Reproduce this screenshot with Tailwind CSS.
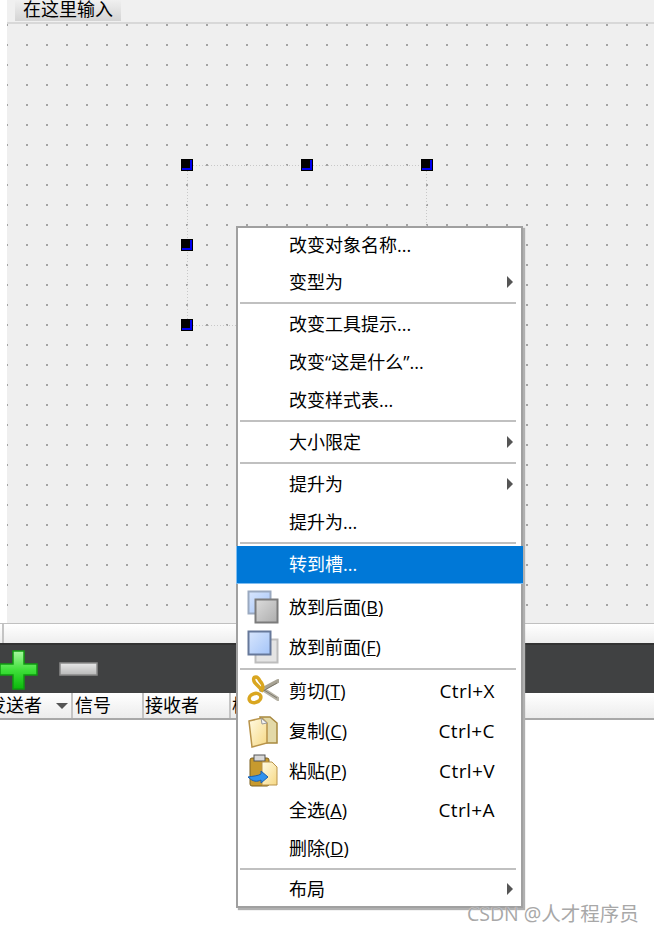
<!DOCTYPE html>
<html>
<head>
  <title>Qt Designer</title>
  <meta charset="utf-8">
  <script src="https://cdn.jsdelivr.net/npm/@tailwindcss/browser@4"></script>
</head>
<body class="relative w-[654px] h-[934px] overflow-hidden bg-white text-black text-[18px] font-['Open_Sans','Noto_Sans_CJK_SC',sans-serif]">

  <!-- designer form -->
  <div class="flex h-[643px]">
    <div class="w-[7px] bg-white"></div>
    <div class="flex-1 flex flex-col min-w-0">
      <div class="h-[22px] bg-[#f0f0f0] flex pl-2">
        <div class="w-[106px] h-[21px] pl-2 flex items-end text-[18px] leading-[24px] bg-gradient-to-b from-[#f0f0f0] to-[#d4d4d4]">在这里输入</div>
      </div>
      <div class="h-[2px] bg-[#d8d8d8]"></div>
      <div class="relative flex-1 bg-[#efefef]">
        <svg class="absolute inset-0" width="647" height="597" shape-rendering="crispEdges">
          <defs>
            <pattern id="dots" x="-1" y="0" width="20" height="20" patternUnits="userSpaceOnUse">
              <rect width="2" height="2" fill="#a4a4a4"/>
            </pattern>
          </defs>
          <rect width="647" height="597" fill="url(#dots)"/>
          <g stroke="#c8c8c8" stroke-dasharray="1 2">
            <path d="M186 141.5H414M180.5 147V295M419.5 147V202M186 301.5H230"/>
          </g>
          <g id="handles">
            <rect x="174" y="135" width="12" height="12" fill="#000"/><rect x="175" y="136" width="10" height="10" fill="#0000ee"/><rect x="175" y="136" width="8" height="8" fill="#000"/>
            <rect x="294" y="135" width="12" height="12" fill="#000"/><rect x="295" y="136" width="10" height="10" fill="#0000ee"/><rect x="295" y="136" width="8" height="8" fill="#000"/>
            <rect x="414" y="135" width="12" height="12" fill="#000"/><rect x="415" y="136" width="10" height="10" fill="#0000ee"/><rect x="415" y="136" width="8" height="8" fill="#000"/>
            <rect x="174" y="215" width="12" height="12" fill="#000"/><rect x="175" y="216" width="10" height="10" fill="#0000ee"/><rect x="175" y="216" width="8" height="8" fill="#000"/>
            <rect x="174" y="295" width="12" height="12" fill="#000"/><rect x="175" y="296" width="10" height="10" fill="#0000ee"/><rect x="175" y="296" width="8" height="8" fill="#000"/>
          </g>
        </svg>
      </div>
    </div>
  </div>

  <!-- scroll strip is part of the form's lower edge -->
  <div class="absolute left-0 right-0 top-[623px] h-[20px] border-t border-[#c0c0c0] bg-gradient-to-b from-white to-[#eeeeee] flex">
    <div class="ml-[2px] w-[2px] h-full bg-[#c4c4c4]"></div>
  </div>

  <!-- signal/slot editor toolbar -->
  <div class="h-[50px] bg-[#404142] border-t-2 border-[#333333] flex items-start">
    <svg class="mt-[5px] ml-[-1px]" width="39" height="41" viewBox="0 0 39 41">
      <defs>
        <linearGradient id="plus" x1="0" y1="0" x2="0" y2="1">
          <stop offset="0" stop-color="#a8f7a0"/><stop offset="0.5" stop-color="#3fe03a"/><stop offset="1" stop-color="#0bb80b"/>
        </linearGradient>
      </defs>
      <path d="M14 1h11v13h13v11H25v14H14V25H1V14h13z" fill="url(#plus)" stroke="#0f9a10" stroke-width="1.5"/>
    </svg>
    <svg class="mt-[17px] ml-[21px]" width="39" height="14" viewBox="0 0 39 14">
      <defs>
        <linearGradient id="minus" x1="0" y1="0" x2="0" y2="1">
          <stop offset="0" stop-color="#e8e8e8"/><stop offset="1" stop-color="#b8b8b8"/>
        </linearGradient>
      </defs>
      <rect x="1" y="1" width="37" height="12" fill="url(#minus)" stroke="#8a8a8a" stroke-width="1.5"/>
    </svg>
  </div>

  <!-- connection table header -->
  <div class="h-[27px] border-b-2 border-[#a8a8a8] bg-gradient-to-b from-white to-[#ececec] flex text-[18px] leading-[25px] overflow-hidden">
    <div class="w-[73px] shrink-0 border-r-2 border-[#c4c4c4] flex items-center relative">
      <span class="ml-[-12px] whitespace-nowrap">发送者</span>
      <svg class="absolute left-[56px] top-[10px]" width="12" height="6"><path d="M0 0h12L6 6z" fill="#555"/></svg>
    </div>
    <div class="w-[71px] shrink-0 border-r-2 border-[#c4c4c4] pl-[2px]">信号</div>
    <div class="w-[87px] shrink-0 border-r-2 border-[#c4c4c4] pl-[1px]">接收者</div>
    <div class="pl-[1px]">槽函数</div>
  </div>

  <!-- context menu -->
  <div class="absolute left-[236px] top-[226px] w-[287px] h-[682px] bg-white border-2 border-[#a0a0a0] shadow-[2px_2px_1px_#b0b0b0] pl-[2px] pr-[5px] text-[18px]">
    <div class="h-[35px] pl-[49px] flex items-center">改变对象名称...</div>
    <div class="h-[38px] pl-[49px] flex items-center justify-between">变型为
      <svg width="6" height="12" class="mr-[3px]"><path d="M0 0l6 6-6 6z" fill="#555"/></svg>
    </div>
    <div class="h-[2px] my-[1px] bg-[#c0c0c0]"></div>
    <div class="h-[38px] pl-[49px] flex items-center">改变工具提示...</div>
    <div class="h-[38px] pl-[49px] flex items-center">改变“这是什么”...</div>
    <div class="h-[38px] pl-[49px] flex items-center">改变样式表...</div>
    <div class="h-[2px] my-[1px] bg-[#c0c0c0]"></div>
    <div class="h-[38px] pl-[49px] flex items-center justify-between">大小限定
      <svg width="6" height="12" class="mr-[3px]"><path d="M0 0l6 6-6 6z" fill="#555"/></svg>
    </div>
    <div class="h-[2px] my-[1px] bg-[#c0c0c0]"></div>
    <div class="h-[38px] pl-[49px] flex items-center justify-between">提升为
      <svg width="6" height="12" class="mr-[3px]"><path d="M0 0l6 6-6 6z" fill="#555"/></svg>
    </div>
    <div class="h-[38px] pl-[49px] flex items-center">提升为...</div>
    <div class="h-[2px] my-[1px] bg-[#c0c0c0]"></div>
    <div class="h-[38px] mt-[2px] ml-[-4px] mr-[-7px] pl-[52px] flex items-center bg-[#0078d7] text-white border border-[#7fbdf0] border-r-0 border-t-0">转到槽...</div>

    <div class="h-[40px] mt-[3px] flex items-center">
      <svg class="ml-[7px] mr-[10px] shrink-0" width="32" height="34" viewBox="0 0 32 34">
        <defs>
          <linearGradient id="paneBlue" x1="0" y1="0" x2="1" y2="1">
            <stop offset="0" stop-color="#d8e6fd"/><stop offset="1" stop-color="#a4c4f8"/>
          </linearGradient>
          <linearGradient id="paneGray" x1="0" y1="0" x2="1" y2="1">
            <stop offset="0" stop-color="#dcdcdc"/><stop offset="1" stop-color="#adadad"/>
          </linearGradient>
        </defs>
        <rect x="1.5" y="1.5" width="22" height="22" fill="url(#paneBlue)" stroke="#9aa9c0" stroke-width="2"/>
        <rect x="8.5" y="9.5" width="22" height="23" fill="url(#paneGray)" stroke="#7b7b7b" stroke-width="2"/>
      </svg>
      <span>放到后面(<u>B</u>)</span>
    </div>
    <div class="h-[40px] flex items-center">
      <svg class="ml-[7px] mr-[10px] shrink-0" width="32" height="34" viewBox="0 0 32 34">
        <rect x="8.5" y="9.5" width="22" height="23" fill="#e4e4e4" stroke="#bdbdbd" stroke-width="2"/>
        <rect x="1.5" y="1.5" width="22" height="23" fill="url(#paneBlue)" stroke="#66789a" stroke-width="2"/>
      </svg>
      <span>放到前面(<u>F</u>)</span>
    </div>
    <div class="h-[2px] my-[1px] bg-[#c0c0c0]"></div>

    <div class="h-[40px] flex items-center">
      <svg class="ml-[7px] mr-[10px] shrink-0" width="32" height="32" viewBox="0 0 32 32" fill="none">
        <!-- blades -->
        <path d="M14 15L31 6" stroke="#a8a394" stroke-width="4" stroke-linecap="round"/>
        <path d="M14 13L31 24" stroke="#b5b1a3" stroke-width="4" stroke-linecap="round"/>
        <path d="M16 16L30 8M17 15L30 23" stroke="#6f6b60" stroke-width="0.8"/>
        <!-- gold grips -->
        <path d="M9 2c-3 0-3 3-1 6l7 7c2-3 0-7-2-9-1-2-2-4-4-4z" fill="#fff" stroke="#d9a620" stroke-width="3.5"/>
        <ellipse cx="8" cy="23" rx="6" ry="4.5" transform="rotate(-20 8 23)" fill="#fff" stroke="#d9a620" stroke-width="3.5"/>
      </svg>
      <span class="flex-1">剪切(<u>T</u>)</span>
      <span class="mr-[21px] text-[19px] tracking-[0.4px]">Ctrl+X</span>
    </div>
    <div class="h-[40px] flex items-center">
      <svg class="ml-[7px] mr-[10px] shrink-0" width="32" height="34" viewBox="0 0 32 34">
        <defs>
          <linearGradient id="sheet" x1="0" y1="0" x2="1" y2="1">
            <stop offset="0" stop-color="#fffbe4"/><stop offset="1" stop-color="#f6d884"/>
          </linearGradient>
        </defs>
        <path d="M13 3h10l7 6v20H18z" fill="#e3d9a8" stroke="#a8893f" stroke-width="1.5"/>
        <path d="M2 7l13-3 5 5v20L5 33z" fill="url(#sheet)" stroke="#b8934a" stroke-width="1.5"/>
        <path d="M14 4l1 6 5-1z" fill="#f4f4f4" stroke="#9a9a9a"/>
      </svg>
      <span class="flex-1">复制(<u>C</u>)</span>
      <span class="mr-[21px] text-[19px] tracking-[0.4px]">Ctrl+C</span>
    </div>
    <div class="h-[40px] flex items-center">
      <svg class="ml-[7px] mr-[10px] shrink-0" width="32" height="34" viewBox="0 0 32 34">
        <rect x="3" y="4" width="19" height="28" rx="2" fill="#c79a2e" stroke="#7d6020"/>
        <rect x="7" y="1" width="11" height="6" fill="#d8d8d8" stroke="#555"/>
        <path d="M15 8h10l5 5v18H15z" fill="url(#sheet)" stroke="#b8934a"/>
        <path d="M1 23c5 5 9 5 13 3v3l7-6-7-6v3c-3 2-8 2-13 3z" fill="#2f92ee" stroke="#1a5fae"/>
      </svg>
      <span class="flex-1">粘贴(<u>P</u>)</span>
      <span class="mr-[21px] text-[19px] tracking-[0.4px]">Ctrl+V</span>
    </div>
    <div class="h-[38px] pl-[49px] flex items-center">
      <span class="flex-1">全选(<u>A</u>)</span>
      <span class="mr-[21px] text-[19px] tracking-[0.4px]">Ctrl+A</span>
    </div>
    <div class="h-[38px] pl-[49px] flex items-center">删除(<u>D</u>)</div>
    <div class="h-[2px] my-[1px] bg-[#c0c0c0]"></div>
    <div class="h-[36px] pl-[49px] flex items-center justify-between">布局
      <svg width="6" height="12" class="mr-[3px]"><path d="M0 0l6 6-6 6z" fill="#555"/></svg>
    </div>
  </div>

  <!-- watermark -->
  <div class="absolute left-[467px] top-[900px] text-[19.5px] leading-[28px] text-[#a8a8a8] whitespace-nowrap [text-shadow:0_0_1px_#fff]">CSDN @人才程序员</div>
</body>
</html>
